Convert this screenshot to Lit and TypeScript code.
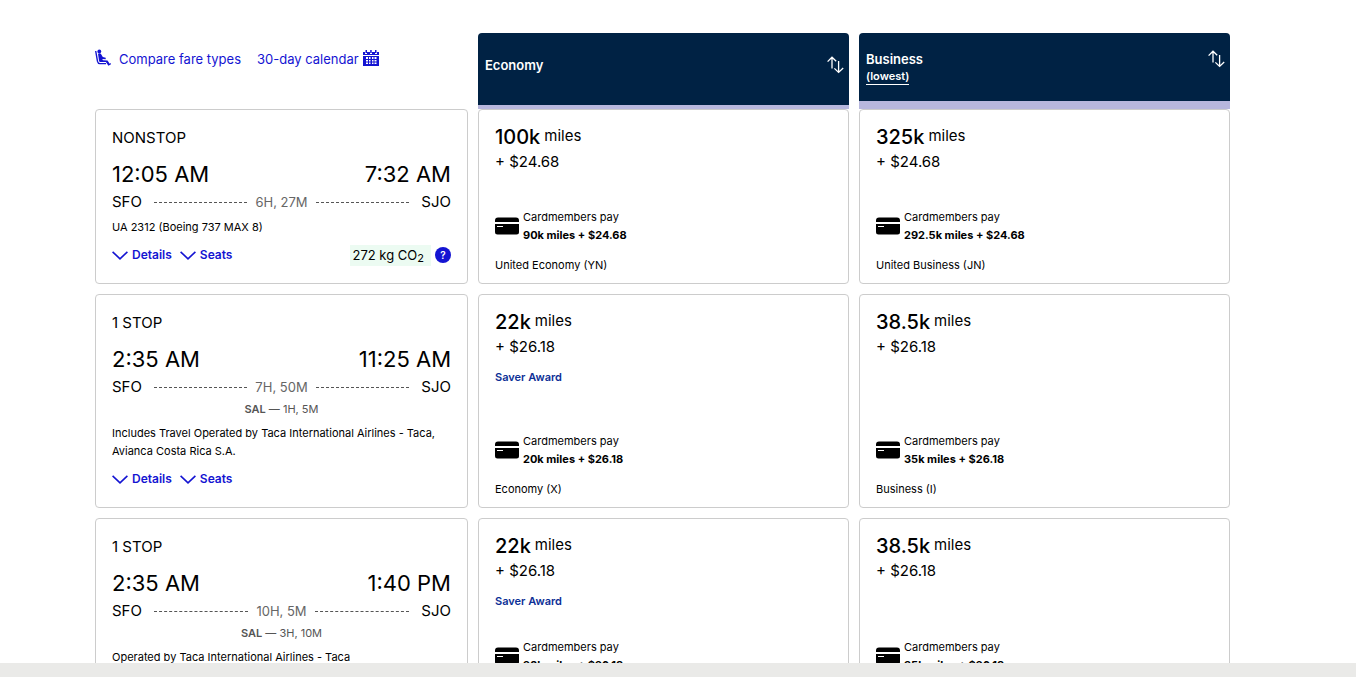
import { LitElement, html, css, nothing } from "lit";
import { customElement, property } from "lit/decorators.js";

interface Fare {
  miles: string;
  tax: string;
  saver?: boolean;
  member: string;
  product: string;
}

interface Flight {
  stops: string;
  depart: string;
  arrive: string;
  duration: string;
  layover?: { airport: string; time: string };
  note: string;
  co2?: string;
  fares: Fare[];
}

const FLIGHTS: Flight[] = [
  {
    stops: "NONSTOP", depart: "12:05 AM", arrive: "7:32 AM", duration: "6H, 27M",
    note: "UA 2312 (Boeing 737 MAX 8)", co2: "272 kg CO",
    fares: [
      { miles: "100k", tax: "$24.68", member: "90k miles + $24.68", product: "United Economy (YN)" },
      { miles: "325k", tax: "$24.68", member: "292.5k miles + $24.68", product: "United Business (JN)" },
    ],
  },
  {
    stops: "1 STOP", depart: "2:35 AM", arrive: "11:25 AM", duration: "7H, 50M",
    layover: { airport: "SAL", time: "1H, 5M" },
    note: "Includes Travel Operated by Taca International Airlines - Taca, Avianca Costa Rica S.A.",
    fares: [
      { miles: "22k", tax: "$26.18", saver: true, member: "20k miles + $26.18", product: "Economy (X)" },
      { miles: "38.5k", tax: "$26.18", member: "35k miles + $26.18", product: "Business (I)" },
    ],
  },
  {
    stops: "1 STOP", depart: "2:35 AM", arrive: "1:40 PM", duration: "10H, 5M",
    layover: { airport: "SAL", time: "3H, 10M" },
    note: "Operated by Taca International Airlines - Taca",
    fares: [
      { miles: "22k", tax: "$26.18", saver: true, member: "20k miles + $26.18", product: "Economy (X)" },
      { miles: "38.5k", tax: "$26.18", member: "35k miles + $26.18", product: "Business (I)" },
    ],
  },
];

const chevron = html`<svg width="16" height="9" viewBox="0 0 16 9" fill="none" stroke="currentColor" stroke-width="1.6" aria-hidden="true"><path d="M.6.8 8 7.8 15.4.8" /></svg>`;

const sortArrows = html`<svg width="17" height="18" viewBox="0 0 17 18" fill="none" stroke="currentColor" stroke-width="1.3" aria-hidden="true"><path d="M.6 5.600 5 1.200l4.200 4M5 1.400v11.200M11.600 5v11.200M7.400 12.400l4.200 4 4.600-4.400" /></svg>`;

@customElement("flight-card")
export class FlightCard extends LitElement {
  @property({ attribute: false }) flight!: Flight;

  static styles = css`
    :host {
      display: block;
      box-sizing: border-box;
      border: 1px solid #ccc;
      border-radius: 4px;
      padding: 16px;
      font-size: 11px;
      line-height: 18px;
    }
    .stops { font-size: 15px; line-height: 24px; margin-bottom: 8px; }
    .times {
      display: flex;
      justify-content: space-between;
      font-size: 22px;
      line-height: 32px;
    }
    .route { display: flex; align-items: center; font-size: 15px; line-height: 24px; }
    .airport { min-width: 42px; }
    .end { text-align: right; }
    .dash { flex: 1; border-top: 1px dashed #555; }
    .duration { padding: 0 8px; font-size: 13px; color: #666; }
    .layover { text-align: center; color: #555; padding: 1px 0 6px; }
    .layover b { font-weight: 600; }
    .note { margin-bottom: 7px; }
    .direct { margin-top: 4px; }
    .actions { display: flex; align-items: center; gap: 8px; height: 24px; }
    button {
      font: inherit;
      border: 0;
      padding: 0;
      background: none;
      cursor: pointer;
    }
    .toggle {
      display: flex;
      align-items: center;
      gap: 4px;
      color: #1414d2;
      font-size: 12px;
      font-weight: 600;
    }
    .co2 {
      margin-left: auto;
      background: #ecfbf2;
      padding: 0 7px 0 3px;
      font-size: 13px;
      line-height: 21px;
    }
    .co2 sub { font-size: 11px; line-height: 0; vertical-align: -2px; }
    .help {
      width: 16px;
      height: 16px;
      margin-left: -4px;
      border-radius: 50%;
      background: #1414d2;
      color: #fff;
      font-size: 10px;
      font-weight: 600;
      line-height: 16px;
    }
  `;

  render() {
    const f = this.flight;
    return html`
      <div class="stops">${f.stops}</div>
      <div class="times"><span>${f.depart}</span><span>${f.arrive}</span></div>
      <div class="route">
        <span class="airport">SFO</span>
        <span class="dash"></span>
        <span class="duration">${f.duration}</span>
        <span class="dash"></span>
        <span class="airport end">SJO</span>
      </div>
      ${f.layover
        ? html`<div class="layover"><b>${f.layover.airport}</b> — ${f.layover.time}</div>`
        : html`<div class="direct"></div>`}
      <div class="note">${f.note}</div>
      <div class="actions">
        <button class="toggle">${chevron}Details</button>
        <button class="toggle">${chevron}Seats</button>
        ${f.co2
          ? html`<span class="co2">${f.co2}<sub>2</sub></span><button class="help" aria-label="About carbon emissions">?</button>`
          : nothing}
      </div>
    `;
  }
}

@customElement("fare-card")
export class FareCard extends LitElement {
  @property({ attribute: false }) fare!: Fare;

  static styles = css`
    :host {
      display: flex;
      flex-direction: column;
      box-sizing: border-box;
      border: 1px solid #ccc;
      border-radius: 4px;
      padding: 16px 16px 9px;
      font-size: 11px;
      line-height: 18px;
    }
    .miles {
      display: flex;
      align-items: flex-start;
      gap: 4px;
      font-size: 15px;
      line-height: 20px;
      margin-bottom: 2px;
    }
    .miles b { font-size: 20px; font-weight: 500; line-height: 22px; }
    .tax { font-size: 15px; line-height: 24px; }
    .saver { margin-top: 9px; color: #0c2f96; font-weight: 600; }
    .member {
      display: flex;
      align-items: center;
      gap: 4px;
      margin-top: auto;
      margin-bottom: 12px;
    }
    .member b { display: block; font-weight: 700; }
  `;

  render() {
    const f = this.fare;
    return html`
      <div class="miles"><b>${f.miles}</b><span>miles</span></div>
      <div class="tax">+ ${f.tax}</div>
      ${f.saver ? html`<div class="saver">Saver Award</div>` : nothing}
      <div class="member">
        <svg width="24" height="18" viewBox="0 0 24 18" aria-hidden="true">
          <path d="M3 .5h18a3 3 0 0 1 3 3V5H0V3.500a3 3 0 0 1 3-3Z" />
          <path d="M0 7h24v8a2.500 2.500 0 0 1-2.500 2.500h-19A2.500 2.500 0 0 1 0 15Z" />
          <path d="M2 9.500h6" stroke="#fff" stroke-width="1" />
        </svg>
        <div>Cardmembers pay<b>${f.member}</b></div>
      </div>
      <div>${f.product}</div>
    `;
  }
}

@customElement("app-root")
export class AppRoot extends LitElement {
  static styles = css`
    :host {
      display: flex;
      flex-direction: column;
      height: 100vh;
      background: #fff;
      color: #000;
      font-family: Inter, "Liberation Sans", sans-serif;
    }
    .results {
      flex: 1;
      min-height: 0;
      overflow-y: auto;
      scrollbar-width: none;
      padding: 33px 126px 0 95px;
    }
    .row {
      display: grid;
      grid-template-columns: 373fr 371fr 371fr;
      column-gap: 10px;
      margin-bottom: 10px;
    }
    .head { margin-bottom: 0; height: 76px; }
    .tools { display: flex; padding-top: 16px; gap: 16px; font-size: 13px; line-height: 20px; }
    .tool {
      display: flex;
      align-items: flex-start;
      gap: 4px;
      height: 20px;
      color: #1414d2;
      text-decoration: none;
      white-space: nowrap;
    }
    .seat { margin-right: 4px; }
    .cabin {
      display: flex;
      align-items: flex-start;
      justify-content: space-between;
      box-sizing: border-box;
      padding: 22px 5px 0 7px;
      background: #002244;
      color: #fff;
      border-bottom: 4px solid #b7b7dd;
      border-radius: 4px 4px 0 0;
      font-size: 13px;
      font-weight: 600;
      line-height: 20px;
    }
    .sorted { padding-top: 16px; border-bottom-width: 8px; }
    .lowest {
      display: block;
      width: max-content;
      border-bottom: 1px solid #fff;
      color: #fff;
      font-size: 11px;
      line-height: 15px;
      text-decoration: none;
    }
    .sort {
      display: flex;
      border: 0;
      padding: 1px 0;
      background: none;
      color: inherit;
      cursor: pointer;
    }
    .band { height: 14px; background: #eaeae8; }
  `;

  render() {
    return html`
      <main class="results">
        <div class="row head">
          <nav class="tools">
            <a class="tool" href="#compare">
              <svg class="seat" width="16" height="17" viewBox="0 0 16 17" fill="none" stroke="currentColor" aria-hidden="true">
                <circle cx="4.300" cy="2.400" r="1.900" fill="currentColor" stroke="none" />
                <path d="M.7 2 2.500 12.400c.3 1.500 1 2.200 2.400 2.200H11" stroke-width="1.400" />
                <path d="M3 4.800c1-.8 2.400-.8 3 .2l1.800 3 2.900.7v1.500l-3.400-.2.6 1.200 4.600.3 2.200 3.200 1-.6.300 1.200-2.600 1.500-2.500-3.800H5.700c-1 0-1.500-.5-1.700-1.500Z" fill="currentColor" stroke="none" />
              </svg>
              <span>Compare fare types</span>
            </a>
            <a class="tool" href="#calendar">
              <span>30-day calendar</span>
              <svg width="16" height="17" viewBox="0 0 16 17" aria-hidden="true">
                <path fill="currentColor" d="M0 3h2v2h2V3h3v2h2V3h3v2h2V3h2v3H0Z" />
                <path fill="currentColor" d="M2.500 1H4v3H2.500ZM7.200 1h1.500v3H7.200ZM12 1h1.500v3H12ZM0 7h16v10H0Z" />
                <path fill="#fff" d="M3 8h2v2H3zm3 0h1.500v2H6zm3 0h1.500v2H9zm2.500 0h2v2h-2zM3 11h2v1.500H3zm3 0h1.500v1.500H6zm3 0h1.500v1.500H9zm2.500 0h2v1.500h-2zM3 13.500h2V15H3zm3 0h1.500V15H6zm3 0h1.500V15H9zm2.500 0h2V15h-2z" />
              </svg>
            </a>
          </nav>
          <div class="cabin">
            <span>Economy</span>
            <button class="sort" aria-label="Sort by Economy">${sortArrows}</button>
          </div>
          <div class="cabin sorted">
            <span>Business<a class="lowest" href="#lowest">(lowest)</a></span>
            <button class="sort" aria-label="Sort by Business">${sortArrows}</button>
          </div>
        </div>
        ${FLIGHTS.map(
          (f) => html`
            <div class="row">
              <flight-card .flight=${f}></flight-card>
              ${f.fares.map((fare) => html`<fare-card .fare=${fare}></fare-card>`)}
            </div>
          `
        )}
      </main>
      <div class="band"></div>
    `;
  }
}
